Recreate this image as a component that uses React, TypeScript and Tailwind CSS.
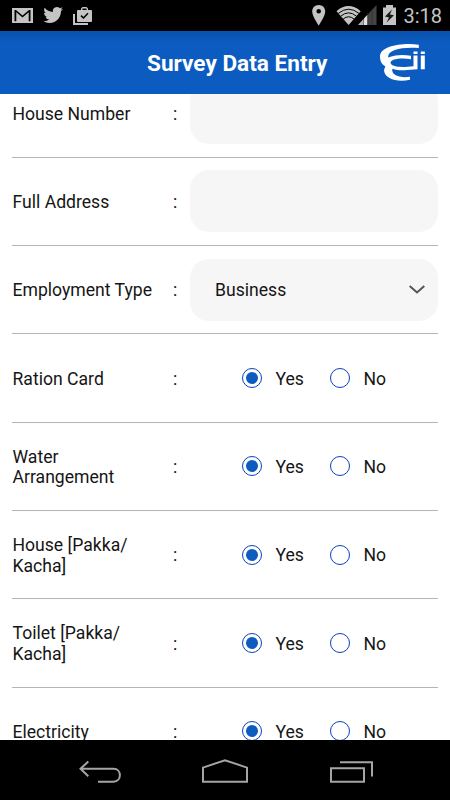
import React from "react";

const LABEL = "text-[17.6px] leading-[20.5px] text-[#151515]";

function StatusBar() {
  return (
    <div className="flex h-[31px] shrink-0 items-center justify-between bg-black">
      <svg className="h-[31px] w-[100px]" viewBox="0 0 100 31" fill="#c4c4c4">
        <path fillRule="evenodd" d="M12 8H33V23H12ZM14.5 10V21.3H16.3V12.2L22.5 17.6L28.7 12.2V21.3H30.5V10H29L22.5 15.4L16 10Z" />
        <path transform="translate(43.3 5.2) scale(.82)" d="M23.95 4.57a10 10 0 0 1-2.82.77 4.96 4.96 0 0 0 2.16-2.72c-.95.55-2 .95-3.13 1.18a4.92 4.92 0 0 0-8.38 4.48C7.69 8.09 4.07 6.13 1.64 3.16a4.82 4.82 0 0 0-.67 2.48c0 1.71.87 3.21 2.19 4.1a4.9 4.9 0 0 1-2.23-.62v.06a4.92 4.92 0 0 0 3.95 4.83 5 5 0 0 1-2.21.08 4.94 4.94 0 0 0 4.6 3.42A9.87 9.87 0 0 1 0 19.54a14 14 0 0 0 7.55 2.21c9.05 0 14-7.5 14-13.98 0-.21 0-.42-.02-.63a9.94 9.94 0 0 0 2.46-2.55z" />
        <path d="M73 14H75V23H88V25H73Z" />
        <path fillRule="evenodd" d="M78 10H81V8.5L82.5 7H86.5L88 8.5V10H91Q92 10 92 11V21Q92 22 91 22H78Q77 22 77 21V11Q77 10 78 10ZM82.5 10H86.5V8.5H82.5Z" />
        <path d="M81 15.7L83.5 18L88 13.3" fill="none" stroke="#000" strokeWidth="1.6" />
      </svg>
      <div className="flex h-[31px] items-center">
        <svg className="h-[31px] w-[100px]" viewBox="0 0 100 31">
          <path fillRule="evenodd" fill="#c4c4c4" d="M18.7 5C15 5 12.2 7.8 12.2 11.4C12.2 16 18.7 25.5 18.7 25.5S25.2 16 25.2 11.4C25.2 7.8 22.4 5 18.7 5ZM18.7 9A2.3 2.3 0 1 1 18.7 13.6A2.3 2.3 0 0 1 18.7 9Z" />
          <path fill="#c4c4c4" d="M36.5 11.2Q48.5 1 60.7 11.2L48.6 25Z" />
          <path fill="none" stroke="#000" strokeWidth="1" d="M38.3 13.4Q48.6 5 59 13.4M40.7 16.2Q48.6 9.5 56.5 16.2M43.2 19Q48.6 14.5 54 19" />
          <path fill="#444" d="M76.5 5V25H58Z" />
          <path fill="#b0b0b0" d="M58 25L63.5 19V25Z" />
          <path fill="#e1e1e1" d="M64 18.5L67.5 14.8V25H64Z" />
          <path d="M67.8 13V25M72 9V25" stroke="#292929" strokeWidth=".7" />
          <path fill="#c4c4c4" d="M83 7.5H86V5H93V7.5H96V25H83Z" />
          <path fill="#171717" d="M92 9.5L85 16.5L89 17.4L86.6 22.5L94 15.3L89.9 14.4Z" />
        </svg>
        <span className="w-[50px] pl-[3.5px] text-[20px] leading-[31px] text-[#c4c4c4]"><span className="relative top-[1px]">3:18</span></span>
      </div>
    </div>
  );
}

function Logo() {
  return (
    <svg className="h-[40px] w-[50px]" viewBox="0 0 50 40" fill="#fff">
      <path d="M40.8 1.7C25 -.5 2 2.5 2 13.6C2 18.5 4 22.2 8 23.6L12.5 18.5C10.5 17.6 10.2 16 10.2 13.5C10.2 6.5 25 3.6 40.8 5Z" />
      <path d="M33 12.8C20 10.6 6.5 13.5 6 19.5C6 21.5 6.6 22.6 7.4 23.6C6.2 25.6 6 27 6.2 28.6C7.5 35.5 18 39.6 32 36.8V33.8C22 35.4 14.6 32.2 14.2 27.6C14.1 26.8 14.3 26.2 14.7 25.8C18.5 27.3 24 27.6 29 27.1L39.5 26.3V12.6H35.5V23.2L27 23.9C19 24.4 12.6 22.8 12.6 19.8C12.6 16.2 22 14.6 33 16.2Z" />
      <path d="M35.5 8.4H39.5V11.1H35.5ZM42.8 8.4H46.8V11.1H42.8ZM42.8 12.6H46.8V26.3H42.8Z" />
    </svg>
  );
}

function Header() {
  return (
    <header className="flex h-[63px] shrink-0 items-center bg-[linear-gradient(#0952ac_0px,#0b5bc1_12px)] pl-[147px]">
      <h1 className="w-[231px] whitespace-nowrap pt-[3px] text-[22.6px] font-bold leading-[28px] text-white">Survey Data Entry</h1>
      <Logo />
    </header>
  );
}

function Row({ label, children }: { label: React.ReactNode; children: React.ReactNode }) {
  return (
    <div className="flex h-[88.33px] shrink-0 items-center border-b border-[#b4b4b4]">
      <div className={`w-[161px] pl-[0.5px] pt-[2px] ${LABEL}`}>{label}</div>
      <div className={`w-[17px] pt-[2px] ${LABEL}`}>:</div>
      {children}
    </div>
  );
}

function Field({ children }: { children?: React.ReactNode }) {
  return (
    <div className="flex h-[62px] w-[247.5px] items-center justify-between rounded-[19px] bg-[#f6f6f6] pl-[25px] pr-[13px]">
      {children}
    </div>
  );
}

function Radio({ label, checked }: { label: string; checked?: boolean }) {
  return (
    <div className="flex w-[88px] items-center">
      <div className="mr-[13.5px] flex size-[20px] items-center justify-center rounded-full border border-[#0b3fc1]">
        {checked && <div className="size-[12px] rounded-full bg-[#0b5bc1]" />}
      </div>
      <span className={`pt-[2px] ${LABEL}`}>{label}</span>
    </div>
  );
}

function YesNo() {
  return (
    <div className="ml-[52px] flex">
      <Radio label="Yes" checked />
      <Radio label="No" />
    </div>
  );
}

function NavBar() {
  return (
    <nav className="h-[60px] shrink-0 bg-black">
      <svg className="h-[60px] w-[450px]" viewBox="0 0 450 60" fill="none" stroke="#a5a5a5" strokeWidth="2">
        <path d="M80 28.8H113.5C122 28.8 122 41.7 113.5 41.7H98M88.3 21.5L80.5 28.8L88.3 36.2" />
        <path d="M203 41.8V27.6L225 20.2L247 27.6V41.8Z" />
        <path d="M331 28.2H364V41.8H331ZM340 22.2H372V36.5" />
      </svg>
    </nav>
  );
}

export default function App() {
  return (
    <div className="flex h-[800px] w-[450px] flex-col overflow-hidden bg-white font-[Roboto,sans-serif]">
      <StatusBar />
      <Header />
      <main className="flex min-h-0 flex-1 flex-col overflow-hidden px-[12px]">
        <div className="-mt-[24.8px] flex flex-col">
          <Row label="House Number"><Field /></Row>
          <Row label="Full Address"><Field /></Row>
          <Row label="Employment Type">
            <Field>
              <span className={`pt-[2px] ${LABEL}`}>Business</span>
              <svg className="h-[10px] w-[16px]" viewBox="0 0 16 10" fill="none" stroke="#555" strokeWidth="2">
                <path d="M.7 1L8 7.5L15.3 1" />
              </svg>
            </Field>
          </Row>
          <Row label="Ration Card"><YesNo /></Row>
          <Row label={<>Water<br />Arrangement</>}><YesNo /></Row>
          <Row label={<>House [Pakka/<br />Kacha]</>}><YesNo /></Row>
          <Row label={<>Toilet [Pakka/<br />Kacha]</>}><YesNo /></Row>
          <Row label="Electricity"><YesNo /></Row>
        </div>
      </main>
      <NavBar />
    </div>
  );
}
